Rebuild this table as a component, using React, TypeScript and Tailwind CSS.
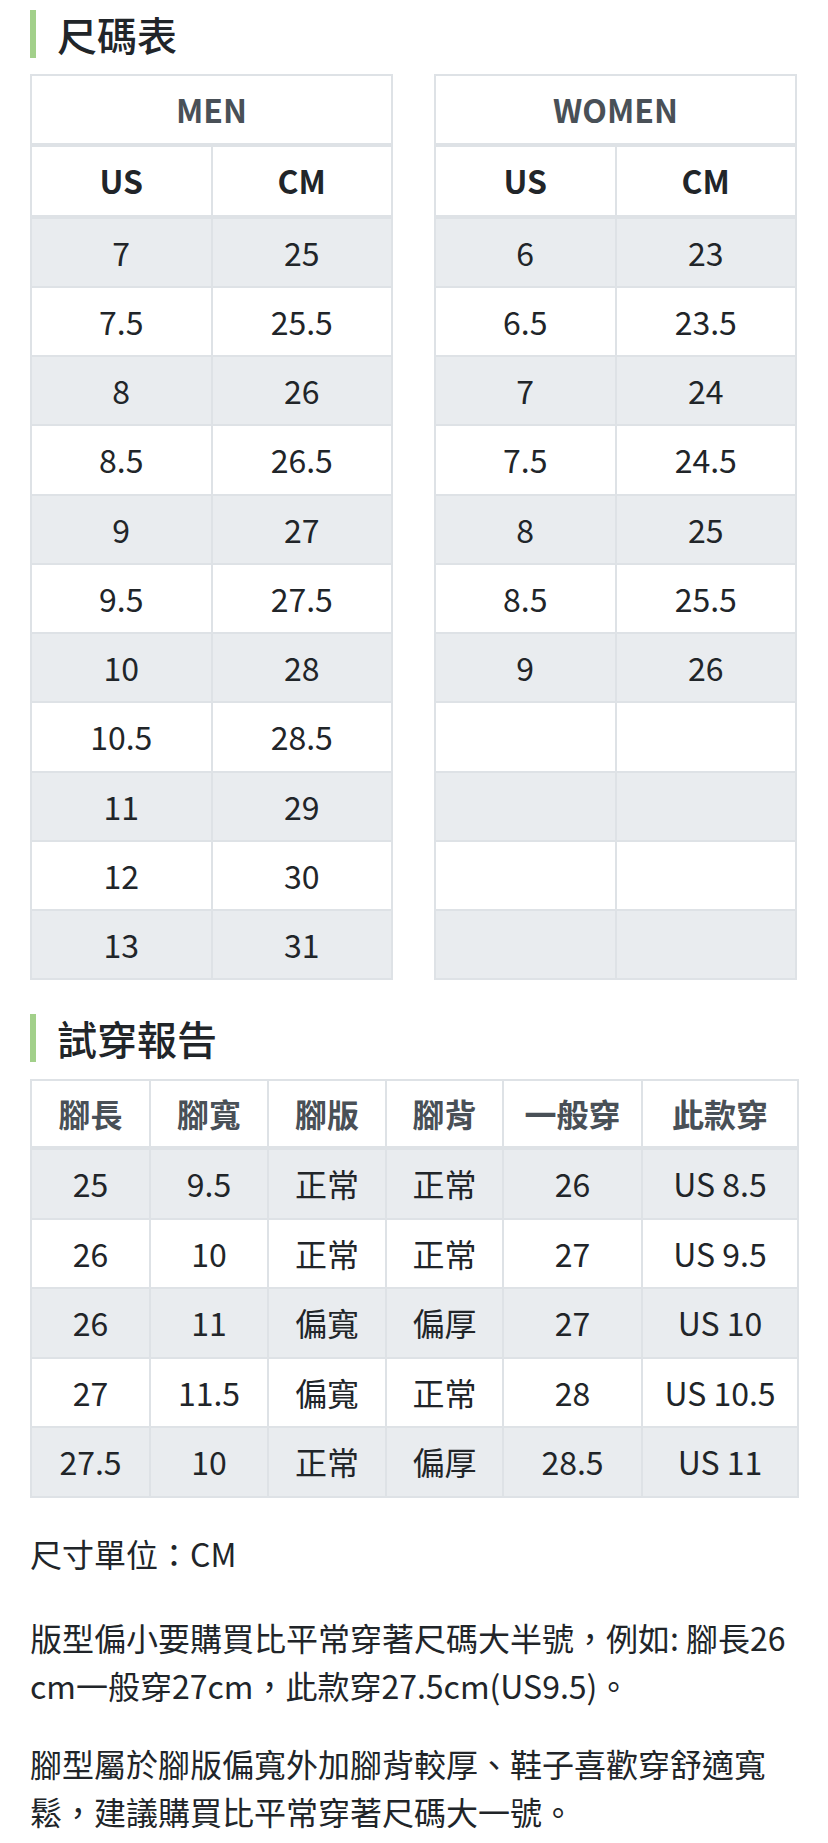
import React from "react";

const men = [
  ["7", "25"],
  ["7.5", "25.5"],
  ["8", "26"],
  ["8.5", "26.5"],
  ["9", "27"],
  ["9.5", "27.5"],
  ["10", "28"],
  ["10.5", "28.5"],
  ["11", "29"],
  ["12", "30"],
  ["13", "31"],
];

const women = [
  ["6", "23"],
  ["6.5", "23.5"],
  ["7", "24"],
  ["7.5", "24.5"],
  ["8", "25"],
  ["8.5", "25.5"],
  ["9", "26"],
  ["", ""],
  ["", ""],
  ["", ""],
  ["", ""],
];

const reportHead = ["腳長", "腳寬", "腳版", "腳背", "一般穿", "此款穿"];
const reportCols = ["w-[119px]", "w-[118px]", "w-[118px]", "w-[117px]", "w-[139px]", "w-[156px]"];

const report = [
  ["25", "9.5", "正常", "正常", "26", "US 8.5"],
  ["26", "10", "正常", "正常", "27", "US 9.5"],
  ["26", "11", "偏寬", "偏厚", "27", "US 10"],
  ["27", "11.5", "偏寬", "正常", "28", "US 10.5"],
  ["27.5", "10", "正常", "偏厚", "28.5", "US 11"],
];

function Title({ children }: { children: React.ReactNode }) {
  return (
    <h2 className="border-l-[6px] border-[#a2d08a] pl-[21px] text-[40px] font-medium leading-[48px] text-[#212529]">
      {children}
    </h2>
  );
}

function SizeTable({ label, rows }: { label: string; rows: string[][] }) {
  return (
    <table className="w-[363px] table-fixed border-collapse border-2 border-[#dee2e6] text-center">
      <thead>
        <tr>
          <th colSpan={2} className="border-2 border-b-4 border-[#dee2e6] p-0 font-bold leading-[67.25px] text-[#495057]">
            {label}
          </th>
        </tr>
        <tr>
          <th className="border-2 border-b-4 border-[#dee2e6] p-0 font-bold leading-[67.25px] text-[#212529]">US</th>
          <th className="border-2 border-b-4 border-[#dee2e6] p-0 font-bold leading-[67.25px] text-[#212529]">CM</th>
        </tr>
      </thead>
      <tbody>
        {rows.map((r, i) => (
          <tr key={i} className={i % 2 === 0 ? "bg-[#e9ecef]" : "bg-white"}>
            <td className="border-2 border-[#dee2e6] p-0 leading-[67.25px]">{r[0] || "\u00a0"}</td>
            <td className="border-2 border-[#dee2e6] p-0 leading-[67.25px]">{r[1] || "\u00a0"}</td>
          </tr>
        ))}
      </tbody>
    </table>
  );
}

export default function App() {
  return (
    <div className="min-h-[1843px] bg-white pt-[10px] pl-[30px] pr-[31px] font-['Noto_Sans_CJK_TC','Noto_Sans',sans-serif] text-[32px] text-[#212529]">
      <Title>尺碼表</Title>

      <div className="mt-[16px] flex justify-between">
        <SizeTable label="MEN" rows={men} />
        <SizeTable label="WOMEN" rows={women} />
      </div>

      <div className="mt-[34px]">
        <Title>試穿報告</Title>
      </div>

      <table className="mt-[17px] w-full table-fixed border-collapse border-2 border-[#dee2e6] text-center">
        <colgroup>
          {reportCols.map((c, i) => (
            <col key={i} className={c} />
          ))}
        </colgroup>
        <thead>
          <tr>
            {reportHead.map((h) => (
              <th key={h} className="border-2 border-b-4 border-[#dee2e6] p-0 font-bold leading-[65px] text-[#495057]">
                {h}
              </th>
            ))}
          </tr>
        </thead>
        <tbody>
          {report.map((r, i) => (
            <tr key={i} className={i % 2 === 0 ? "bg-[#e9ecef]" : "bg-white"}>
              {r.map((c, j) => (
                <td key={j} className="border-2 border-[#dee2e6] p-0 leading-[67.5px]">
                  {c}
                </td>
              ))}
            </tr>
          ))}
        </tbody>
      </table>

      <div className="mt-[31px] leading-[48px]">
        <p>尺寸單位：CM</p>
        <p className="mt-[36px]">
          版型偏小要購買比平常穿著尺碼大半號，例如: 腳長26<wbr />cm一般穿27cm，此款穿27.5cm(US9.5)。
        </p>
        <p className="mt-[30px]">腳型屬於腳版偏寬外加腳背較厚、鞋子喜歡穿舒適寬鬆，建議購買比平常穿著尺碼大一號。</p>
      </div>
    </div>
  );
}
